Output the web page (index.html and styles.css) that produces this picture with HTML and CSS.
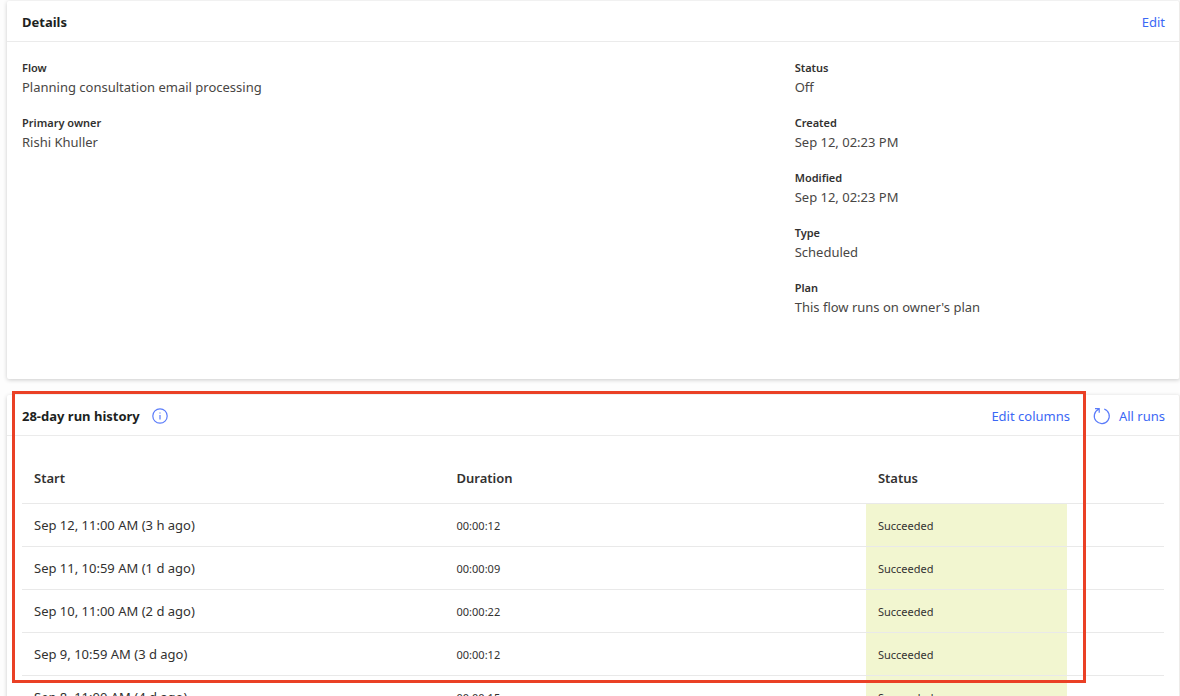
FILE: index.html
```html
<!DOCTYPE html>
<html lang="en">
<head>
<meta charset="utf-8">
<title>Planning consultation email processing</title>
<link rel="stylesheet" href="styles.css">
</head>
<body>
<main class="page">
  <section class="card details">
    <header class="card-header">
      <h2 class="card-title">Details</h2>
      <button type="button" class="command">Edit</button>
    </header>
    <div class="details-body">
      <dl class="fields">
        <div class="field"><dt>Flow</dt><dd>Planning consultation email processing</dd></div>
        <div class="field"><dt>Primary owner</dt><dd>Rishi Khuller</dd></div>
      </dl>
      <dl class="fields">
        <div class="field"><dt>Status</dt><dd>Off</dd></div>
        <div class="field"><dt>Created</dt><dd>Sep 12, 02:23 PM</dd></div>
        <div class="field"><dt>Modified</dt><dd>Sep 12, 02:23 PM</dd></div>
        <div class="field"><dt>Type</dt><dd>Scheduled</dd></div>
        <div class="field"><dt>Plan</dt><dd>This flow runs on owner's plan</dd></div>
      </dl>
    </div>
  </section>

  <section class="card history">
    <header class="card-header">
      <h2 class="card-title">28-day run history</h2>
      <button type="button" class="icon-button" aria-label="Run history information">
        <svg class="icon" viewBox="0 0 16 16" aria-hidden="true"><circle cx="8" cy="8" r="7.2"/><path d="M8 7v4.5M8 4.4v1.2"/></svg>
      </button>
      <div class="commands">
        <button type="button" class="command">Edit columns</button>
        <button type="button" class="icon-button" aria-label="Refresh">
          <svg class="icon icon-refresh" viewBox="0 0 18 18" aria-hidden="true"><path d="M11.2 2A7.5 7.5 0 1 1 5.6 2.3M2 1.6h4.2v4.2"/></svg>
        </button>
        <a class="command" href="#runs">All runs</a>
      </div>
    </header>
    <div class="table-wrap" id="runs">
      <table class="runs">
        <thead>
          <tr><th class="col-start" scope="col">Start</th><th class="col-duration" scope="col">Duration</th><th class="col-status" scope="col">Status</th><td></td></tr>
        </thead>
        <tbody>
          <tr><td><a href="#run1">Sep 12, 11:00 AM (3 h ago)</a></td><td class="small">00:00:12</td><td class="small succeeded">Succeeded</td><td></td></tr>
          <tr><td><a href="#run2">Sep 11, 10:59 AM (1 d ago)</a></td><td class="small">00:00:09</td><td class="small succeeded">Succeeded</td><td></td></tr>
          <tr><td><a href="#run3">Sep 10, 11:00 AM (2 d ago)</a></td><td class="small">00:00:22</td><td class="small succeeded">Succeeded</td><td></td></tr>
          <tr><td><a href="#run4">Sep 9, 10:59 AM (3 d ago)</a></td><td class="small">00:00:12</td><td class="small succeeded">Succeeded</td><td></td></tr>
          <tr><td><a href="#run5">Sep 8, 11:00 AM (4 d ago)</a></td><td class="small">00:00:15</td><td class="small succeeded">Succeeded</td><td></td></tr>
        </tbody>
      </table>
    </div>
    <div class="highlight" aria-hidden="true"></div>
  </section>
</main>
</body>
</html>
```
FILE: styles.css
```css
* { box-sizing: border-box; }

body {
  margin: 0;
  height: 100vh;
  overflow: hidden;
  background: #fdfdfd;
  color: #484644;
  font-family: "Segoe UI", "Noto Sans", "Open Sans", sans-serif;
  font-size: 13px;
  line-height: 20px;
}

.page {
  display: flex;
  flex-direction: column;
  gap: 16px;
  padding: 1px 0 0 7px;
}

.card {
  position: relative;
  background: #fff;
  border-right: 1px solid #edebe9;
  border-radius: 2px;
  box-shadow: 0 1px 4px rgba(0, 0, 0, 0.2);
}

.card-header {
  display: flex;
  align-items: center;
  height: 41px;
  padding: 1px 14px 0 15px;
  border-bottom: 1px solid #ebebeb;
}

.card-title {
  margin: 0;
  color: #201f1e;
  font-size: 13px;
  font-weight: 700;
}

.command,
.icon-button {
  padding: 0;
  border: 0;
  background: none;
  color: #3b68f5;
  font: inherit;
  text-decoration: none;
}

.details .command { margin-left: auto; }

.commands {
  display: flex;
  align-items: center;
  gap: 8px;
  margin-left: auto;
}

.commands .icon-button { margin-left: 15px; }

.icon-button {
  display: flex;
  margin-left: 12px;
}

.icon {
  width: 16px;
  height: 16px;
  fill: none;
  stroke: #5b7cfa;
  stroke-width: 1.2;
}

.icon-refresh {
  width: 18px;
  height: 18px;
}

.details-body {
  display: grid;
  grid-template-columns: 67.6% 1fr;
  padding: 17px 14px 62px 15px;
}

.fields {
  display: flex;
  flex-direction: column;
  gap: 17px;
  margin: 0;
}

.field dt {
  color: #323130;
  font-size: 11px;
  font-weight: 600;
  line-height: 18px;
}

.field dd { margin: 0; }

.table-wrap { padding: 16px 15px; }

.runs {
  width: 100%;
  border-collapse: collapse;
  table-layout: fixed;
  color: #323130;
}

.runs tr { border-bottom: 1px solid #e9e9e9; }

.runs th,
.runs td {
  height: 43px;
  padding: 1px 12px 0;
  text-align: left;
}

.runs thead th {
  height: 51px;
  font-weight: 600;
}

.runs a {
  color: inherit;
  text-decoration: none;
}

.col-start { width: 37%; }

.col-duration { width: 36.9%; }

.col-status { width: 17.6%; }

.runs .small {
  padding-top: 2px;
  font-size: 11px;
}

.runs .succeeded { background: #f2f6d0; }

.highlight {
  position: absolute;
  top: -4px;
  left: 5px;
  right: 93px;
  height: 292px;
  border: 3px solid #ea4025;
  pointer-events: none;
}
```
